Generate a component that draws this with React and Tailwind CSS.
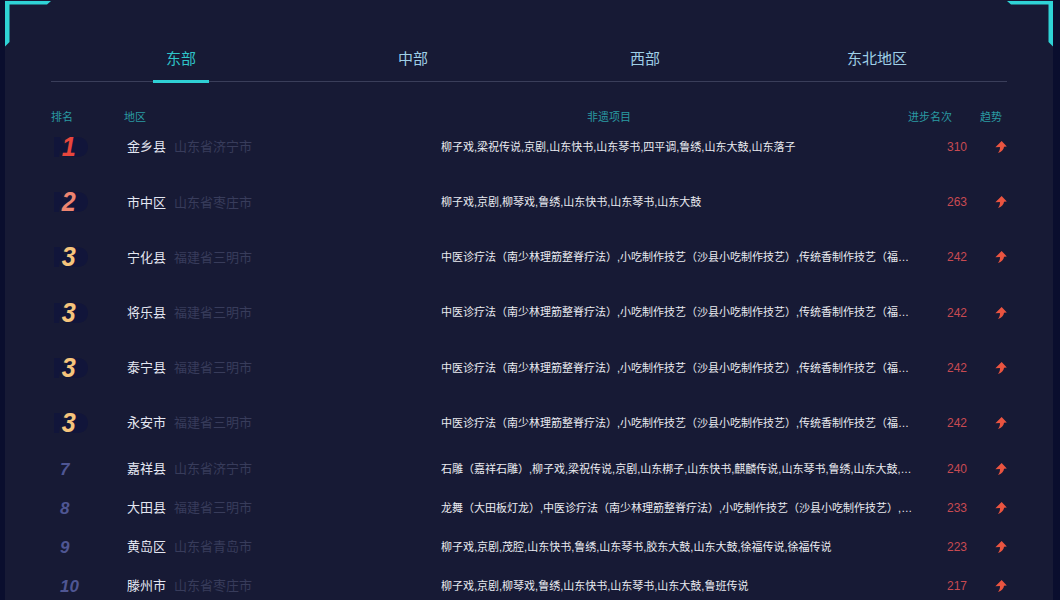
const FONT = { fontFamily: '"Liberation Sans","Noto Sans CJK SC",sans-serif' };
const A = '中医诊疗法（南少林理筋整脊疗法）,小吃制作技艺（沙县小吃制作技艺）,传统香制作技艺（福建省三明市传统香制作技艺）,龙舞';
const rows = [
  [1, '金乡县', '山东省济宁市', '柳子戏,梁祝传说,京剧,山东快书,山东琴书,四平调,鲁绣,山东大鼓,山东落子', 310],
  [2, '市中区', '山东省枣庄市', '柳子戏,京剧,柳琴戏,鲁绣,山东快书,山东琴书,山东大鼓', 263],
  [3, '宁化县', '福建省三明市', A, 242],
  [3, '将乐县', '福建省三明市', A, 242],
  [3, '泰宁县', '福建省三明市', A, 242],
  [3, '永安市', '福建省三明市', A, 242],
  [7, '嘉祥县', '山东省济宁市', '石雕（嘉祥石雕）,柳子戏,梁祝传说,京剧,山东梆子,山东快书,麒麟传说,山东琴书,鲁绣,山东大鼓,山东落子,四平调', 240],
  [8, '大田县', '福建省三明市', '龙舞（大田板灯龙）,中医诊疗法（南少林理筋整脊疗法）,小吃制作技艺（沙县小吃制作技艺）,传统香制作技艺', 233],
  [9, '黄岛区', '山东省青岛市', '柳子戏,京剧,茂腔,山东快书,鲁绣,山东琴书,胶东大鼓,山东大鼓,徐福传说,徐福传说', 223],
  [10, '滕州市', '山东省枣庄市', '柳子戏,京剧,柳琴戏,鲁绣,山东快书,山东琴书,山东大鼓,鲁班传说', 217],
];

function Medal() {
  return (
    <svg width="38" height="22" viewBox="0 0 38 22" className="absolute left-[1px] top-1/2 -translate-y-1/2">
      <path d="M2 1h6l5 9 5-9h7c7 0 11 4 11 10s-4 10-11 10h-5l-1-8-4 8h-3l-4-8-1 8H2z" fill="#11153a" />
    </svg>
  );
}

function Arrow() {
  return (
    <svg width="13" height="14" viewBox="0 0 13 14">
      <path d="M7.200 0.500 12.800 6.400 9.800 6.600C9.500 9.600 7.200 12.200 3.200 13.600 5 11.400 5.600 9.200 5.300 7L0.400 7.200z" fill="#ea5440" />
    </svg>
  );
}

function Rank({ n }) {
  if (n > 3) {
    return <span className="ml-[9px] text-[17px] font-bold italic leading-none text-[#4f5693]">{n}</span>;
  }
  const color = n === 1 ? 'text-[#e8463c]' : n === 2 ? 'text-[#ee8570]' : 'text-[#f6c57c]';
  return (
    <div className="relative flex h-[28px] w-[36px] items-center justify-center">
      <Medal />
      <span className={`relative inline-block scale-x-90 text-[28px] font-bold italic leading-none ${color}`}>{n}</span>
    </div>
  );
}

function Row({ r }) {
  const [n, name, prov, items, num] = r;
  return (
    <div className={`flex items-center ${n <= 3 ? 'h-[55.2px]' : 'h-[39px]'} ${n === 7 ? '-mt-px' : ''}`}>
      <div className="flex w-[73px] items-center">
        <Rank n={n} />
      </div>
      <div className="flex w-[317px] items-center pl-[3px]">
        <span className="w-[47px] text-[13px] text-[#e4e7f2]">{name}</span>
        <span className="text-[13px] text-[#383c5b]">{prov}</span>
      </div>
      <div className="w-[472px] truncate text-[11px] text-[#e9eaf0]">{items}</div>
      <div className="w-[54px] text-right text-[12px] text-[#c84a52]">{num}</div>
      <div className="ml-[28px] flex w-[12px] justify-end">
        <Arrow />
      </div>
    </div>
  );
}

export default function App() {
  const tabs = ['东部', '中部', '西部', '东北地区'];
  return (
    <div className="relative h-[600px] w-[1060px] overflow-hidden bg-[#0a0e2e]" style={FONT}>
      <div className="ml-[5px] mr-[7px] h-[600px] overflow-hidden bg-[#171a35] px-[46px] pt-[44px]">
        <div className="relative grid h-[38px] grid-cols-[repeat(4,232px)] justify-start border-b border-[#3a3e5a] pl-[14px]">
          {tabs.map((t, i) => (
            <div key={t} className="relative flex justify-center">
              <span className={`text-[15px] leading-[30px] ${i === 0 ? 'text-[#2fc4c9]' : 'text-[#9fcfe6]'}`}>{t}</span>
              {i === 0 && <div className="absolute bottom-[-2px] h-[3px] w-[56px] bg-[#2fd0d5]" />}
            </div>
          ))}
        </div>
        <div className="mt-[27px] flex h-[16px] items-center text-[11px] text-[#2a9aa3]">
          <span className="w-[73px]">排名</span>
          <span className="w-[463px]">地区</span>
          <span className="w-[44px]">非遗项目</span>
          <span className="ml-[277px] w-[72px]">进步名次</span>
          <span>趋势</span>
        </div>
        <div className="mt-[-5.5px]">
          {rows.map((r, i) => (
            <Row key={i} r={r} />
          ))}
        </div>
      </div>
      <svg width="46" height="47" viewBox="0 0 46 47" className="absolute left-[5px] top-0">
        <path d="M0 1H46L42 4.500H4.500V42L0 46.500z" fill="#2fd3d6" />
      </svg>
      <svg width="46" height="47" viewBox="0 0 46 47" className="absolute left-[1007px] top-0">
        <path d="M46 1H0L4 4.500H41.500V42L46 46.500z" fill="#2fd3d6" />
      </svg>
    </div>
  );
}
